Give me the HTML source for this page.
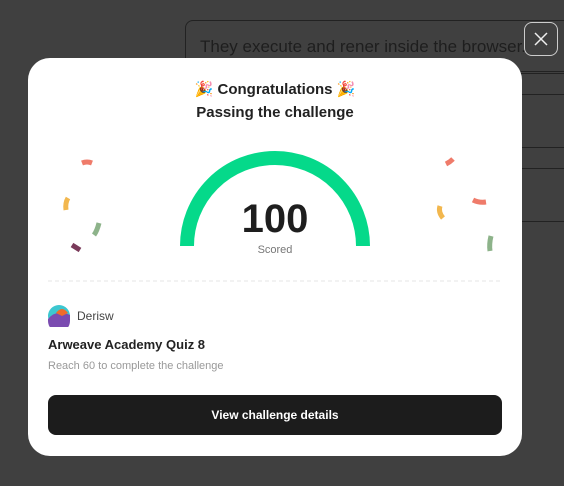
<!DOCTYPE html>
<html><head><style>
body{margin:0;width:564px;height:486px;background:#404040;font-family:"Liberation Sans",sans-serif;position:relative;overflow:hidden}
.bg{position:absolute;left:185px;top:20px;width:400px;height:52px;border:1px solid #222;border-radius:8px;box-sizing:border-box;color:#1e1e1e;font-size:17px;padding:16px 14px}
.ln{position:absolute;left:500px;width:70px;height:1px;background:#222}
.close{position:absolute;left:524px;top:22px;width:34px;height:34px;border:1px solid #ccc;border-radius:8px;box-sizing:border-box}
.modal{position:absolute;left:28px;top:58px;width:494px;height:398px;background:#fff;border-radius:22px}
.t{position:absolute;width:100%;text-align:center;font-weight:bold;color:#222;font-size:15px}
.btn{position:absolute;left:20px;top:337px;width:454px;height:40px;background:#1c1c1c;border-radius:8px;color:#fff;font-size:12px;font-weight:bold;text-align:center;line-height:40px}
</style></head><body>
<div class="bg">They execute and rener inside the browser.</div>
<div class="ln" style="top:73px"></div><div class="ln" style="top:94px"></div><div class="ln" style="top:147px"></div><div class="ln" style="top:168px"></div><div class="ln" style="top:221px"></div>
<div class="close"><svg width="32" height="32"><path d="M10 10L22 22M22 10L10 22" stroke="#eee" stroke-width="1.5"/></svg></div>
<div class="modal">
<div class="t" style="top:22px">🎉 Congratulations 🎉</div>
<div class="t" style="top:46px">Passing the challenge</div>
<svg style="position:absolute;left:0;top:0" width="494" height="240">
<path d="M159 188A88 88 0 0 1 335 188" fill="none" stroke="#05d98a" stroke-width="14"/>
<g stroke-width="5" fill="none">
<path d="M54 105q5-2 10 0" stroke="#ef7b6a"/>
<path d="M40 140q-3 5-2 12" stroke="#f2b74e"/>
<path d="M71 165q-2 8-5 12" stroke="#8db38a"/>
<path d="M44 187l8 5" stroke="#7a3a5a"/>
<path d="M418 106q4-2 7-5" stroke="#ef7b6a"/>
<path d="M445 142q6 3 13 2" stroke="#ef7b6a"/>
<path d="M412 148q-2 6 3 12" stroke="#f2b74e"/>
<path d="M463 178q-2 8-1 15" stroke="#8db38a"/>
</g>
<text x="247" y="174" text-anchor="middle" font-size="40" font-weight="bold" fill="#1e1e1e" font-family="Liberation Sans">100</text>
<text x="247" y="195" text-anchor="middle" font-size="11" fill="#777" font-family="Liberation Sans">Scored</text>
<line x1="20" y1="223" x2="474" y2="223" stroke="#e6e6e6" stroke-dasharray="4 3"/>
</svg>
<svg style="position:absolute;left:20px;top:247px" width="22" height="22"><circle cx="11" cy="11" r="11" fill="#3cc7d0"/><path d="M0 14q8-10 22-4v6a11 11 0 0 1-22 0z" fill="#7a4bb0"/><path d="M8 8q6-8 12 0l-6 3z" fill="#f06c2a"/></svg>
<div style="position:absolute;left:49px;top:251px;font-size:12px;color:#444">Derisw</div>
<div style="position:absolute;left:20px;top:279px;font-size:13px;font-weight:bold;color:#222">Arweave Academy Quiz 8</div>
<div style="position:absolute;left:20px;top:302px;font-size:11px;color:#999">Reach 60 to complete the challenge</div>
<div class="btn">View challenge details</div>
</div>
</body></html>
